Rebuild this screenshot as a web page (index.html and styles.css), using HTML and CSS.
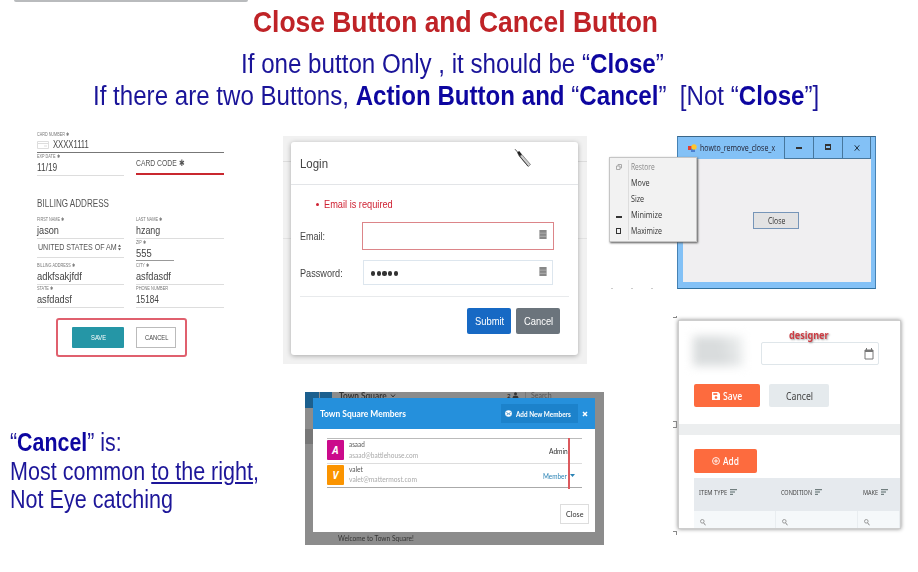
FILE: index.html
```
<!DOCTYPE html>
<html lang="en">
<head>
<meta charset="utf-8">
<title>Close Button and Cancel Button</title>
<link rel="stylesheet" href="styles.css">
</head>
<body>
<div class="slide">
  <header class="head">
    <div class="tab"></div>
    <h1 class="fit" data-w="405">Close Button and Cancel Button</h1>
    <p class="fit" data-w="423">If one button Only , it should be “<b>Close</b>”</p>
    <p class="fit" data-w="726">If there are two Buttons, <b>Action Button and</b> “<b>Cancel</b>”&nbsp; [Not “<b>Close</b>”]</p>
  </header>
  <main class="columns">
    <section class="col-a">
      <form class="card-form">
        <div class="field number"><label class="fit" data-w="32">CARD NUMBER ✱</label>
          <div class="value"><svg class="card-icon" viewBox="0 0 12 8"><path d="M.5.5h11v7H.5zM.5 2.500h11M7 5h3" fill="none" stroke="#ddd"/></svg><span class="fit" data-w="36">XXXX1111</span></div></div>
        <div class="pair">
          <div class="field tall"><label class="fit" data-w="23">EXP DATE ✱</label><div class="value"><span class="fit" data-w="20">11/19</span></div></div>
          <div class="code"><span class="fit" data-w="49">CARD CODE ✱</span></div>
        </div>
        <h2><span class="fit" data-w="72">BILLING ADDRESS</span></h2>
        <div class="pair">
          <div class="field"><label class="fit" data-w="27">FIRST NAME ✱</label><div class="value"><span class="fit" data-w="22">jason</span></div></div>
          <div class="field"><label class="fit" data-w="26">LAST NAME ✱</label><div class="value"><span class="fit" data-w="24">hzang</span></div></div>
          <div class="select"><span class="fit" data-w="79">UNITED STATES OF AM</span><svg viewBox="0 0 4 8"><path d="M2 0l2 3H0zM2 8L0 5h4z" fill="#555"/></svg></div>
          <div class="field zip"><label class="fit" data-w="10">ZIP ✱</label><div class="value"><span class="fit" data-w="16">555</span></div></div>
          <div class="field"><label class="fit" data-w="38">BILLING ADDRESS ✱</label><div class="value"><span class="fit" data-w="45">adkfsakjfdf</span></div></div>
          <div class="field"><label class="fit" data-w="13">CITY ✱</label><div class="value"><span class="fit" data-w="35">asfdasdf</span></div></div>
          <div class="field"><label class="fit" data-w="16">STATE ✱</label><div class="value"><span class="fit" data-w="35">asfdadsf</span></div></div>
          <div class="field"><label class="fit" data-w="32">PHONE NUMBER</label><div class="value"><span class="fit" data-w="23">15184</span></div></div>
        </div>
        <div class="callout"><div class="save"><span class="fit" data-w="15">SAVE</span></div><div class="cancel"><span class="fit" data-w="23">CANCEL</span></div></div>
      </form>
      <div class="note">
        <p class="fit" data-w="112">“<b>Cancel</b>” is:</p>
        <p class="fit" data-w="249">Most common <u>to the right</u>,</p>
        <p class="fit" data-w="163">Not Eye catching</p>
      </div>
    </section>

    <section class="col-b">
      <div class="login-back">
        <div class="login">
          <div class="login-head"><span class="fit" data-w="28">Login</span>
            <svg class="pen" viewBox="0 0 18 20"><path d="M1 1.200l2.500 2.800" stroke="#555"/><path d="M3 4.500L5.200 3l3 3.700-2.500 2z" fill="#222"/><path d="M5.700 8.500L8 6.700l8.500 9.800-2.300 2z" fill="#ccc" stroke="#777" stroke-width=".8"/><path d="M4.500 6.700l9.500 11.500" stroke="#444"/></svg></div>
          <div class="error"><i></i><span class="fit" data-w="69">Email is required</span></div>
          <div class="login-row email"><span class="fit" data-w="25">Email:</span><div class="box"><svg viewBox="0 0 8 10"><path d="M0 0h8v10H0z" fill="#888"/><path d="M0 3.500h8M0 7h8" stroke="#ccc" stroke-width=".6"/></svg></div></div>
          <div class="login-row"><span class="fit" data-w="43">Password:</span><div class="box"><div class="dots"><i></i><i></i><i></i><i></i><i></i></div><svg viewBox="0 0 8 10"><path d="M0 0h8v10H0z" fill="#888"/><path d="M0 3.500h8M0 7h8" stroke="#ccc" stroke-width=".6"/></svg></div></div>
          <div class="login-actions"><div class="submit"><span class="fit" data-w="29">Submit</span></div><div class="grey"><span class="fit" data-w="29">Cancel</span></div></div>
        </div>
      </div>

      <div class="town">
        <div class="town-top"><i class="sq one"></i><i class="sq two"></i><span class="fit" data-w="48">Town Square</span><svg class="chev" viewBox="0 0 6 4"><path d="M1 .5l2 2.500L5 .5" fill="none" stroke="#333"/></svg><span class="count">2</span><svg class="user" viewBox="0 0 8 8"><circle cx="4" cy="2.200" r="2" fill="#333"/><path d="M0 8c0-2.500 2-3.500 4-3.500S8 5.500 8 8z" fill="#333"/></svg><span class="bar"></span><span class="fit search" data-w="21">Search</span></div>
        <div class="modal">
          <div class="modal-head"><span class="fit" data-w="86">Town Square Members</span>
            <div class="add"><svg viewBox="0 0 8 8"><circle cx="4" cy="4" r="3.800" fill="#fff"/><path d="M1.500 2.500L4 4.500l2.500-2M2 6l1.500-2M6 6L4.500 4" stroke="#1b76bb" fill="none" stroke-width=".8"/></svg><span class="fit" data-w="55">Add New Members</span></div>
            <svg class="x" viewBox="0 0 6 6"><path d="M1 1l4 4M5 1L1 5" stroke="#fff" stroke-width="1.500"/></svg></div>
          <div class="members">
            <div class="member"><div class="avatar pink">A</div><div class="who"><span class="fit" data-w="16">asaad</span><span class="fit mail" data-w="69">asaad@battlehouse.com</span></div><div class="role"><span class="fit" data-w="19">Admin</span></div></div>
            <div class="member"><div class="avatar orange">V</div><div class="who"><span class="fit" data-w="14">valet</span><span class="fit mail" data-w="68">valet@mattermost.com</span></div><div class="role blue"><span class="fit" data-w="24">Member</span><svg viewBox="0 0 5 3"><path d="M0 0h5L2.500 3z" fill="#2a83b5"/></svg></div></div>
            <div class="guide"></div>
          </div>
          <div class="modal-foot"><div class="close"><span class="fit" data-w="17">Close</span></div></div>
        </div>
        <div class="town-bottom"><span class="fit" data-w="76">Welcome to Town Square!</span></div>
      </div>
    </section>

    <section class="col-c">
      <div class="desktop">
        <div class="window">
          <div class="titlebar"><svg class="app" viewBox="0 0 9 9"><path d="M0 2h4v4H0z" fill="#e33d31"/><path d="M3 4h4v4H3z" fill="#4b7fd0"/><circle cx="6" cy="3" r="2.700" fill="#ffc52e"/></svg><span class="fit" data-w="75">howto_remove_close_x</span>
            <div class="ctl"><i class="min"></i></div><div class="ctl"><i class="max"></i></div><div class="ctl"><svg viewBox="0 0 6 6"><path d="M.7.300l4.600 5.400M5.300.300L.7 5.700" stroke="#234" stroke-width="1"/></svg></div></div>
          <div class="client"><div class="win-close"><span class="fit" data-w="17">Close</span></div></div>
        </div>
        <div class="menu">
          <div class="item off"><div class="g"><svg viewBox="0 0 6 6"><path d="M.5 2h3.500v3.500H.5zM2 2V.5h3.500V4H4" fill="none" stroke="#aaa"/></svg></div><span class="fit" data-w="24">Restore</span></div>
          <div class="item"><div class="g"></div><span class="fit" data-w="19">Move</span></div>
          <div class="item"><div class="g"></div><span class="fit" data-w="13">Size</span></div>
          <div class="item"><div class="g"><i class="min"></i></div><span class="fit" data-w="31">Minimize</span></div>
          <div class="item"><div class="g"><i class="max"></i></div><span class="fit" data-w="31">Maximize</span></div>
        </div>
        <div class="specks"><i></i><i></i><i></i></div>
      </div>

      <div class="designer-wrap">
        <div class="marks"><i class="m1"></i><i class="m2"></i><i class="m3"></i></div>
        <div class="designer">
          <div class="top">
            <div class="smudge"></div>
            <div class="date-col"><span class="fit tag" data-w="40">designer</span>
              <div class="date"><svg viewBox="0 0 10 12"><path d="M1 2h8v9H1z" fill="none" stroke="#777"/><path d="M1 2h8v2H1z" fill="#777"/><path d="M2.500 0v2M7.500 0v2" stroke="#777"/></svg></div></div>
          </div>
          <div class="actions">
            <div class="btn hot"><svg viewBox="0 0 8 8"><path d="M0 0h6.300L8 1.700V8H0z" fill="#fff"/><path d="M1.300 1.200h4v1.700h-4z" fill="#fd6b3e"/><circle cx="4" cy="5.500" r="1.300" fill="#fd6b3e"/></svg><span class="fit" data-w="19">Save</span></div>
            <div class="btn cool"><span class="fit" data-w="27">Cancel</span></div>
          </div>
          <div class="band"></div>
          <div class="btn hot add-item"><svg viewBox="0 0 9 9"><circle cx="4.500" cy="4.500" r="3.900" fill="none" stroke="#fff"/><path d="M4.500 2.200v4.600M2.200 4.500h4.600" stroke="#fff"/></svg><span class="fit" data-w="16">Add</span></div>
          <div class="grid">
            <div class="th"><span class="fit" data-w="28">ITEM TYPE</span><svg viewBox="0 0 7 6"><path d="M0 .7h7M0 3h5M0 5.300h3" stroke="#566"/></svg></div>
            <div class="th"><span class="fit" data-w="31">CONDITION</span><svg viewBox="0 0 7 6"><path d="M0 .7h7M0 3h5M0 5.300h3" stroke="#566"/></svg></div>
            <div class="th"><span class="fit" data-w="15">MAKE</span><svg viewBox="0 0 7 6"><path d="M0 .7h7M0 3h5M0 5.300h3" stroke="#566"/></svg></div>
            <div class="td"><svg viewBox="0 0 6 7"><circle cx="2.300" cy="2.300" r="1.800" fill="none" stroke="#888" stroke-width=".8"/><path d="M3.500 3.700l2 2.600" stroke="#888"/></svg></div>
            <div class="td"><svg viewBox="0 0 6 7"><circle cx="2.300" cy="2.300" r="1.800" fill="none" stroke="#888" stroke-width=".8"/><path d="M3.500 3.700l2 2.600" stroke="#888"/></svg></div>
            <div class="td"><svg viewBox="0 0 6 7"><circle cx="2.300" cy="2.300" r="1.800" fill="none" stroke="#888" stroke-width=".8"/><path d="M3.500 3.700l2 2.600" stroke="#888"/></svg></div>
          </div>
        </div>
      </div>
    </section>
  </main>
</div>
<script src="fit.js"></script>
</body>
</html>
```
FILE: styles.css
```
* { box-sizing: border-box; }
body { margin: 0; background: #fff; font-family: "Liberation Sans", Arial, sans-serif; color: #444; }
svg { display: block; flex: none; }
h1, h2, p { margin: 0; font-weight: normal; }
i { display: block; flex: none; }
.slide { width: 918px; height: 572px; overflow: hidden; }
.fit { display: block; white-space: nowrap; flex: none; }
.fit > span { display: inline-block; transform-origin: 0 50%; }

/* heading */
.head { height: 131px; display: flex; flex-direction: column; align-items: center; color: #1a1499; }
.tab { width: 234px; height: 2px; background: #b9bbbd; border-radius: 0 0 4px 4px; align-self: flex-start; margin-left: 14px; }
.head h1 { font-size: 30px; line-height: 40px; font-weight: bold; color: #bf2327; margin: 0 7px 0 0; }
.head p { font-size: 27px; line-height: 32px; }
.head p:nth-of-type(1) { margin: 6px 13px 0 0; }
.head p:nth-of-type(2) { margin-right: 6px; }
.head b, .note b { color: #0d06a0; }

.columns { display: grid; grid-template-columns: 283px 326px 309px; height: 441px; }

/* card form */
.card-form { width: 187px; margin-left: 37px; height: 297px; }
.field { border-bottom: 1px solid #ddd; height: 23px; }
.field label { font-size: 4.800px; line-height: 7px; height: 7px; color: #777; }
.value { font-size: 10px; line-height: 15px; height: 15px; color: #444; display: flex; align-items: center; }
.number { height: 22px; border-color: #777; }
.number label { height: 6px; }
.card-icon { width: 12px; height: 8px; margin-right: 4px; }
.pair { display: grid; grid-template-columns: 87px 88px; column-gap: 12px; }
.tall label { line-height: 8px; }
.code { font-size: 9px; line-height: 20px; height: 22px; border-bottom: 2px solid #c9282f; color: #555; }
.card-form h2 { font-size: 10px; line-height: 14px; margin: 21px 0 5px; color: #555; }
.select { height: 19px; margin-bottom: 4px; display: flex; align-items: center; justify-content: space-between; font-size: 8.500px; padding-left: 1px; padding-right: 3px; padding-bottom: 2px; border-bottom: 1px solid #ddd; color: #555; }
.select svg { width: 3px; height: 7px; }
.zip { width: 38px; border-color: #999; height: 22px; }
.callout { width: 131px; height: 39px; margin: 10px 0 0 19px; border: 2px solid #e0606e; border-radius: 3px; display: flex; padding: 7px 0 0 14px; gap: 12px; font-size: 7px; }
.callout > div { height: 21px; display: flex; align-items: center; justify-content: center; }
.save { width: 52px; background: #2596a6; color: #fff; border-radius: 1px; }
.cancel { width: 40px; border: 1px solid #bbb; }
.note { margin-left: 10px; color: #1d1699; font-size: 25px; line-height: 28.500px; }

/* login */
.login-back { width: 304px; height: 228px; margin-top: 5px; padding: 6px 9px 9px 8px; background: linear-gradient(#dcdcdc, #dcdcdc) 0 25px / 100% 1px no-repeat, linear-gradient(#e2e2e2, #e2e2e2) 0 102px / 100% 1px no-repeat, #f1f1f1; }
.login { height: 213px; background: #fff; border-radius: 3px; box-shadow: 0 1px 5px #0000004d; color: #444; font-size: 11.500px; }
.login-head { height: 43px; border-bottom: 1px solid #e3e5e8; padding: 6px 46px 0 9px; display: flex; justify-content: space-between; font-size: 13.500px; line-height: 32px; }
.pen { width: 18px; height: 20px; }
.error { height: 38px; display: flex; align-items: center; padding-left: 25px; color: #cf2233; font-size: 11.500px; }
.error i { width: 3px; height: 3px; border-radius: 50%; background: #cf2233; margin-right: 5px; }
.login-row { display: flex; align-items: center; justify-content: space-between; margin: 0 25px 0 9px; height: 25px; }
.box { width: 190px; height: 25px; border: 1px solid #dde6ee; display: flex; align-items: center; padding: 0 5px 0 7px; }
.box svg { width: 8px; height: 9px; margin: -3px 0 0 auto; }
.email { height: 28px; margin: -1px 24px 10px 9px; }
.email .box { width: 192px; height: 28px; border-color: #dc8589; padding-right: 6px; }
.dots { display: flex; gap: 1.500px; padding-top: 2px; }
.dots i { width: 4.200px; height: 4.200px; border-radius: 50%; background: #333; }
.login-actions { border-top: 1px solid #e8eaec; margin: 11px 9px 0; padding: 11px 9px 0 0; display: flex; justify-content: flex-end; gap: 5px; color: #fff; font-size: 11px; }
.login-actions div { width: 44px; height: 26px; border-radius: 2px; display: flex; align-items: center; justify-content: center; }
.submit { background: #1769c4; }
.grey { background: #6b747c; }

/* member dialog */
.town { width: 299px; height: 153px; margin: 28px 0 0 22px; background: linear-gradient(#777, #777) 0 37px / 8px 15px no-repeat, #8c8c8c; font-family: Lato, sans-serif; color: #333; }
.town-top { height: 6px; display: flex; font-size: 9px; line-height: 7px; font-weight: bold; }
.sq { height: 16px; background: #1b5f8e; }
.one { width: 14px; margin-right: 1px; }
.two { width: 12px; margin-right: 7px; }
.chev { width: 6px; height: 4px; margin: 2px 0 0 3px; }
.count { margin-left: 111px; font-size: 6px; width: 5px; }
.user { width: 7px; height: 6px; }
.bar { width: 1px; height: 6px; background: #777; margin-left: 6px; }
.search { margin-left: 5px; font-weight: normal; font-size: 8px; color: #555; }
.modal { position: relative; width: 282px; height: 134px; margin-left: 8px; background: #fff; }
.modal-head { height: 31px; background: #2590dc; color: #fff; display: flex; align-items: center; padding-left: 7px; font-size: 9.500px; font-weight: bold; }
.add { margin-left: 95px; width: 77px; height: 19px; background: #1c82cb; display: flex; align-items: center; gap: 4px; padding-left: 4px; font-size: 8px; }
.add svg { width: 7px; height: 7px; }
.x { width: 6px; height: 6px; margin-left: 4px; }
.members { position: relative; margin: 9px 13px 0 14px; border-top: 1px solid #bbb; }
.member { height: 24.500px; border-bottom: 1px solid #ddd; display: flex; padding-top: 1px; }
.member:nth-child(2) { border-color: #aaa; }
.avatar { width: 17px; height: 20px; border-radius: 1px; color: #fff; font: italic bold 10px/20px "Open Sans", sans-serif; text-align: center; }
.pink { background: #cb0a8b; }
.orange { background: #fb9400; }
.who { margin-left: 5px; font-size: 7.500px; line-height: 10.500px; color: #555; }
.who .fit { height: 10.500px; }
.who .mail { color: #aaa; }
.role { margin-left: auto; width: 39px; display: flex; align-items: center; padding-left: 6px; font-size: 8px; }
.blue { color: #2a83b5; padding-left: 0; gap: 3px; }
.role svg { width: 5px; height: 3px; }
.guide { position: absolute; left: 241px; top: -1px; width: 1.500px; height: 51px; background: #dc5a5e; }
.modal-foot { display: flex; justify-content: flex-end; margin: 16px 6px 0 0; }
.close { width: 29px; height: 20px; border: 1px solid #ddd; display: flex; align-items: center; justify-content: center; font-size: 8px; }
.town-bottom { padding-left: 33px; font-size: 8px; line-height: 12px; height: 13px; }

/* desktop window with system menu */
.desktop { position: relative; height: 163px; padding: 5px 0 0 68px; font-family: "Open Sans", sans-serif; }
.window { width: 199px; height: 153px; background: #83c1f6; border: 1px solid #4682b4; border-top-color: #3b6688; border-bottom-color: #31719f; padding: 0 4px 6px 5px; display: flex; flex-direction: column; }
.titlebar { height: 22px; display: flex; align-items: center; font-size: 8.500px; color: #223; padding: 0 0 0 5px; }
.app { width: 9px; height: 9px; margin-right: 3px; }
.titlebar > .fit { margin-top: -1px; }
.ctl { width: 29px; height: 22px; border-left: 1px solid #47779d; border-bottom: 1px solid #47779d; display: flex; align-items: center; justify-content: center; flex: none; }
.titlebar .fit + .ctl { margin-left: auto; }
.ctl:last-child { border-right: 1px solid #47779d; }
.ctl svg { width: 6px; height: 6px; }
.min { width: 6px; height: 2px; background: #333; }
.max { width: 6px; height: 6px; border: 1.500px solid #333; }
.ctl .max { border-width: 2px 1px; margin-bottom: 2px; }
.client { flex: 1; background: #f0eff1; display: flex; align-items: center; justify-content: center; }
.win-close { width: 46px; height: 17px; margin: 0 2px 1px 0; border: 1px solid #7695b8; background: #e2e2e3; display: flex; align-items: center; justify-content: center; font-size: 8.500px; color: #333; }
.menu { position: absolute; left: 0; top: 26px; width: 88px; height: 85px; background: linear-gradient(#ddd, #ddd) 18px 2px / 1px 80px no-repeat, #f2f2f2; border: 1px solid #c5c5c5; box-shadow: 1px 1px 2px #555; padding-top: 1px; font-size: 8.800px; color: #333; }
.item { height: 16px; display: flex; align-items: center; }
.off { color: #888; }
.g { width: 21px; display: flex; justify-content: center; padding-right: 4px; }
.g svg { width: 6px; height: 6px; }
.g .min { margin-top: 4px; }
.menu .max { width: 5px; height: 6px; }
.specks { position: absolute; left: 2px; top: 157px; display: flex; gap: 18px; }
.specks i { width: 2px; height: 1px; background: #ccc; }

/* item editor */
.designer-wrap { display: flex; margin: 22px 0 0 64px; font-family: "Noto Sans", sans-serif; }
.marks { width: 6px; height: 219px; display: flex; flex-direction: column; justify-content: space-between; }
.marks i { width: 4px; border: 1px solid #888; border-left: 0; }
.marks .m1 { height: 2px; border-top: 0; }
.marks .m2 { height: 7px; }
.marks .m3 { height: 4px; border-bottom: 0; }
.designer { width: 221px; height: 207px; margin-top: 5px; background: #fff; box-shadow: 0 0 0 1px #cdcdcd, 0 0 4px 1px #888; overflow: hidden; }
.top { display: flex; height: 63px; padding: 8px 0 0 11px; }
.smudge { width: 50px; height: 30px; margin: 7px 4px 0 3px; background: linear-gradient(75deg, #d9dcdd 55%, #f0f2f2); filter: blur(5px); }
.date-col { margin-left: 14px; }
.tag { margin-left: 28px; font-size: 10px; line-height: 13px; font-weight: bold; color: #cc3b42; text-shadow: 1px 1px 2px #999; }
.date { width: 118px; height: 23px; border: 1px solid #dfe6ea; border-radius: 2px; display: flex; align-items: center; justify-content: flex-end; padding-right: 4px; }
.date svg { width: 10px; height: 12px; }
.actions { display: flex; gap: 9px; padding-left: 15px; height: 40px; }
.btn { height: 23px; border-radius: 2px; display: flex; align-items: center; justify-content: center; font-size: 10px; }
.btn svg { width: 8px; height: 8px; margin-right: 3px; }
.hot { width: 66px; background: #fd6b3e; color: #fff; font-weight: 500; }
.cool { width: 60px; background: #e5eaed; color: #444; }
.band { height: 11px; background: #eceeef; }
.add-item { width: 63px; height: 24px; margin: 14px 0 5px 15px; }
.grid { margin-left: 15px; display: grid; grid-template-columns: 82px 82px 42px; }
.th { height: 33px; background: #e6eaee; display: flex; align-items: center; gap: 3px; padding: 0 0 5px 5px; font-size: 7.800px; color: #444; }
.th svg { width: 7px; height: 6px; }
.td { height: 17px; background: #f5f8fa; border-right: 1px solid #e9edf0; padding: 8px 0 0 6px; }
.td svg { width: 6px; height: 7px; }
```
FILE: fit.js
```
// Condense each label horizontally to the width given in data-w.
document.querySelectorAll('.fit').forEach(function (el) {
  var inner = document.createElement('span');
  while (el.firstChild) inner.appendChild(el.firstChild);
  el.appendChild(inner);
  var w = parseFloat(el.dataset.w);
  inner.style.transform = 'scaleX(' + w / inner.offsetWidth + ')';
  el.style.width = w + 'px';
});
```
